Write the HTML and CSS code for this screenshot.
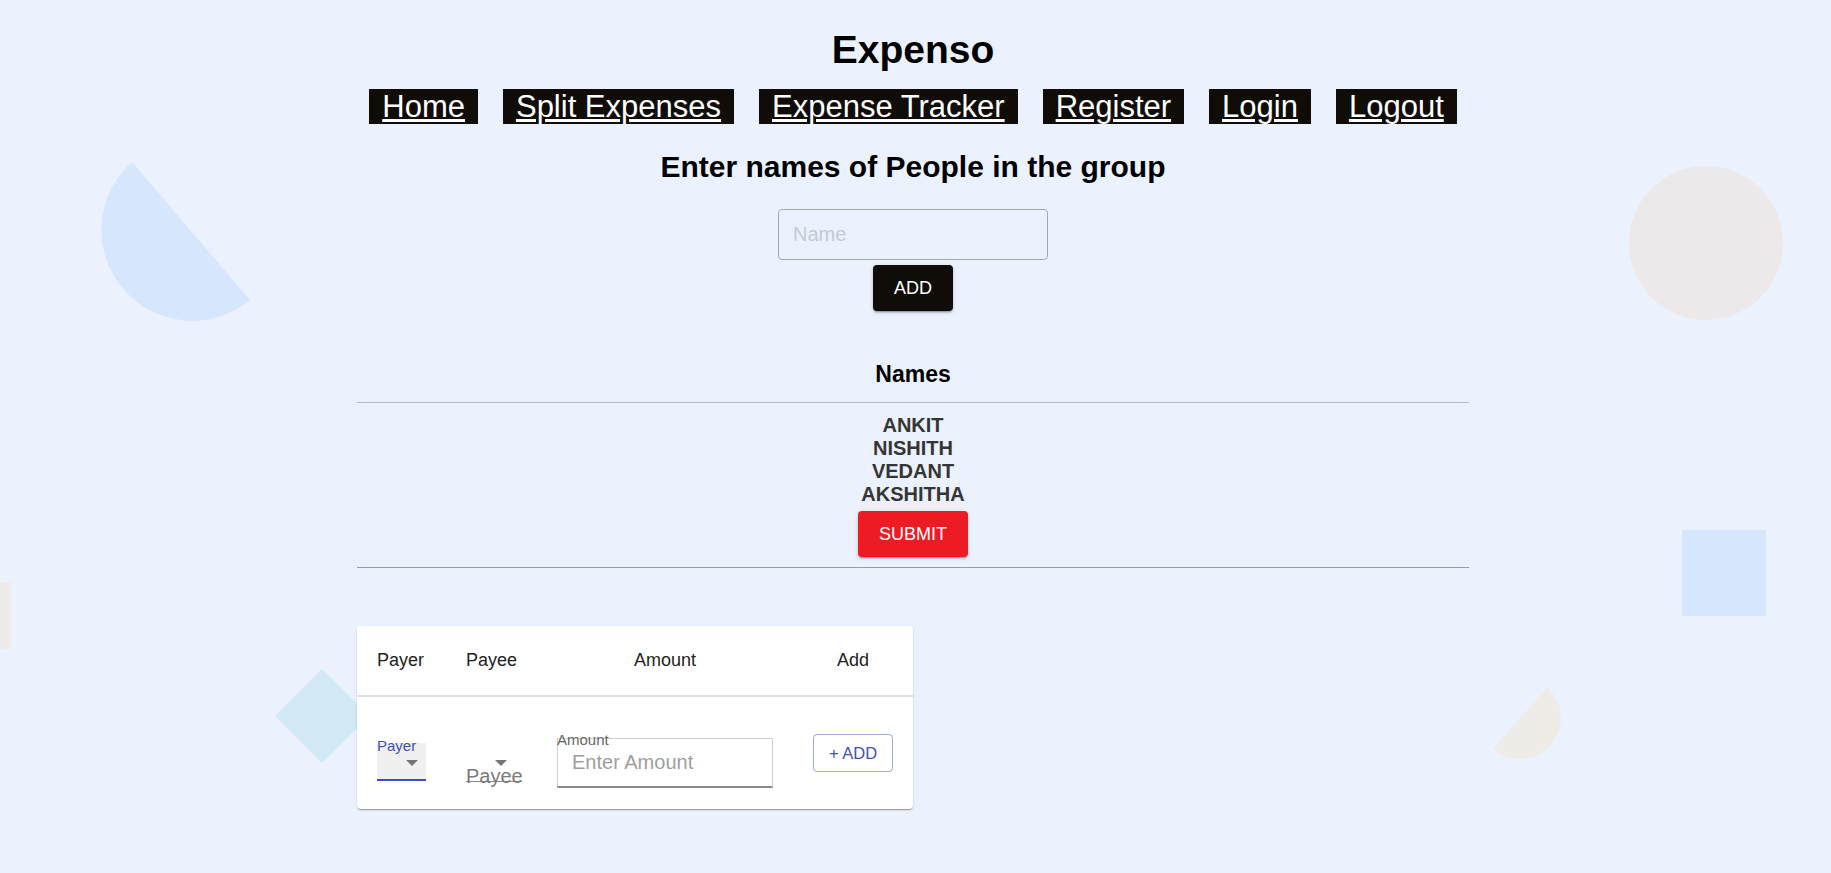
FILE: index.html
```html
<!DOCTYPE html>
<html lang="en">
<head>
<meta charset="utf-8">
<title>Expenso</title>
<link rel="stylesheet" href="styles.css">
</head>
<body>
<div class="bg-shapes" aria-hidden="true">
  <svg width="1831" height="873" viewBox="0 0 1831 873">
    <path d="M132 162 A90.8 90.8 0 0 0 250 300 Z" fill="#d6e6fd"/>
    <circle cx="1706" cy="243" r="77" fill="#ede8ea"/>
    <rect x="0" y="582" width="11" height="67" fill="#efebe8"/>
    <polygon points="322,669 369,716 322,763 275,716" fill="#d2e9f6"/>
    <rect x="1682" y="530" width="84" height="86" fill="#d6e6fd"/>
    <path d="M1547 687 A41 41 0 0 1 1493 749 Z" fill="#efebe7"/>
  </svg>
</div>
<main class="page">
  <h1 class="title">Expenso</h1>
  <nav class="nav">
    <a href="#">Home</a>
    <a href="#">Split Expenses</a>
    <a href="#">Expense Tracker</a>
    <a href="#">Register</a>
    <a href="#">Login</a>
    <a href="#">Logout</a>
  </nav>
  <h2 class="group-title">Enter names of People in the group</h2>
  <input class="name-input" type="text" placeholder="Name">
  <button class="btn btn-dark">ADD</button>

  <section class="names">
    <div class="names-head">Names</div>
    <div class="names-body">
      <div class="name">ANKIT</div>
      <div class="name">NISHITH</div>
      <div class="name">VEDANT</div>
      <div class="name">AKSHITHA</div>
      <button class="btn btn-red">SUBMIT</button>
    </div>
  </section>

  <section class="card">
    <div class="card-row card-head">
      <div class="cell">Payer</div>
      <div class="cell">Payee</div>
      <div class="cell center">Amount</div>
      <div class="cell center">Add</div>
    </div>
    <div class="card-row card-body">
      <div class="cell">
        <div class="select-filled">
          <span class="select-label">Payer</span>
          <span class="arrow arrow-payer"></span>
        </div>
      </div>
      <div class="cell">
        <div class="select-plain">
          <span class="arrow arrow-payee"></span>
          <span class="select-value">Payee</span>
        </div>
      </div>
      <div class="cell center">
        <div class="amount-field">
          <span class="amount-label">Amount</span>
          <input class="amount-input" type="text" placeholder="Enter Amount">
        </div>
      </div>
      <div class="cell center">
        <button class="btn-outline">+ ADD</button>
      </div>
    </div>
  </section>
</main>
</body>
</html>
```

FILE: styles.css
```css
html, body {
  margin: 0;
}

body {
  padding: 0 5px 0 0;
  min-height: 873px;
  background: #ebf2fd;
  font-family: "Liberation Sans", Arial, sans-serif;
  color: #000;
  position: relative;
  overflow: hidden;
}

.bg-shapes {
  position: absolute;
  inset: 0;
  z-index: 0;
  pointer-events: none;
}

.bg-shapes svg {
  display: block;
}

.page {
  position: relative;
  z-index: 1;
  width: 1112px;
  margin: 0 auto;
  display: flex;
  flex-direction: column;
  align-items: center;
}

.title {
  margin: 0;
  padding-top: 27px;
  font-size: 39px;
  line-height: 45px;
  font-weight: 700;
}

.nav {
  display: flex;
  gap: 25px;
  margin-top: 17px;
}

.nav a {
  display: block;
  background: #100c08;
  color: #fff;
  font-size: 31px;
  line-height: 35px;
  padding: 0 13px;
  text-decoration: underline;
}

.group-title {
  margin: 26px 0 0;
  font-size: 30px;
  line-height: 34px;
  font-weight: 700;
}

.name-input {
  margin-top: 25px;
  width: 270px;
  height: 51px;
  box-sizing: border-box;
  border: 1px solid #a8a8a8;
  border-radius: 4px;
  background: transparent;
  padding: 0 14px;
  font-size: 20px;
  font-family: inherit;
  outline: none;
}

.name-input::placeholder {
  color: #c5cad3;
}

.btn {
  height: 46px;
  padding: 0 21px;
  border: none;
  border-radius: 4px;
  color: #fff;
  font-size: 18px;
  font-family: inherit;
  box-shadow: 0 3px 1px -2px rgba(0,0,0,0.2), 0 2px 2px 0 rgba(0,0,0,0.14), 0 1px 5px 0 rgba(0,0,0,0.12);
}

.btn-dark {
  margin-top: 5px;
  background: #100c08;
}

.btn-red {
  margin-top: 5px;
  background: #ed1c24;
}

.names {
  align-self: stretch;
  margin-top: 50px;
  text-align: center;
}

.names-head {
  font-size: 23px;
  line-height: 27px;
  font-weight: 700;
  padding-bottom: 14px;
  border-bottom: 1px solid #b8b8b8;
}

.names-body {
  display: flex;
  flex-direction: column;
  align-items: center;
  padding: 11px 0 10px;
  border-bottom: 1px solid #9a9a9a;
}

.name {
  font-size: 20px;
  line-height: 23px;
  font-weight: 700;
  color: #353535;
}

.card {
  align-self: flex-start;
  margin-top: 58px;
  width: 556px;
  background: #fff;
  border-radius: 4px;
  box-shadow: 0 2px 1px -1px rgba(0,0,0,0.2), 0 1px 1px 0 rgba(0,0,0,0.14), 0 1px 3px 0 rgba(0,0,0,0.12);
}

.card-row {
  display: grid;
  grid-template-columns: 89px 91px 256px 120px;
}

.cell {
  padding: 0 20px;
}

.cell.center {
  display: flex;
  justify-content: center;
}

.card-head {
  height: 69px;
  line-height: 69px;
  font-size: 18px;
  color: #222;
  border-bottom: 2px solid #e0e0e0;
}

.card-body {
  height: 112px;
  align-items: start;
}

.select-filled {
  position: relative;
  margin-top: 46px;
  width: 49px;
  height: 36px;
  background: #f0f0f0;
  border-bottom: 2px solid #3f51b5;
}

.select-label {
  position: absolute;
  left: 0;
  top: -6px;
  font-size: 15px;
  line-height: 17px;
  color: #3f51b5;
}

.arrow {
  position: absolute;
  top: 17px;
  width: 0;
  height: 0;
  border-left: 6px solid transparent;
  border-right: 6px solid transparent;
  border-top: 6px solid #757575;
}

.arrow-payer {
  right: 8px;
}

.arrow-payee {
  left: 29px;
}

.select-plain {
  position: relative;
  margin-top: 46px;
  width: 56px;
  height: 38px;
  border-bottom: 1px solid #8a8a8a;
}

.select-value {
  position: absolute;
  left: 0;
  top: 23px;
  font-size: 20px;
  line-height: 20px;
  color: #7a7a7a;
}

.amount-field {
  position: relative;
  margin-top: 41px;
  width: 216px;
}

.amount-label {
  position: absolute;
  left: 0;
  top: -7px;
  font-size: 15px;
  line-height: 17px;
  color: #666;
}

.amount-input {
  display: block;
  width: 216px;
  height: 50px;
  box-sizing: border-box;
  border: 1px solid #cfcfcf;
  border-bottom: 2px solid #8a8a8a;
  background: transparent;
  padding: 0 14px;
  font-size: 20px;
  font-family: inherit;
  outline: none;
}

.amount-input::placeholder {
  color: #9e9e9e;
}

.btn-outline {
  margin-top: 37px;
  width: 80px;
  height: 38px;
  border: 1px solid rgba(63,81,181,0.5);
  border-radius: 4px;
  background: transparent;
  color: #3f51b5;
  font-size: 16.5px;
  font-family: inherit;
  padding: 0;
}
```
